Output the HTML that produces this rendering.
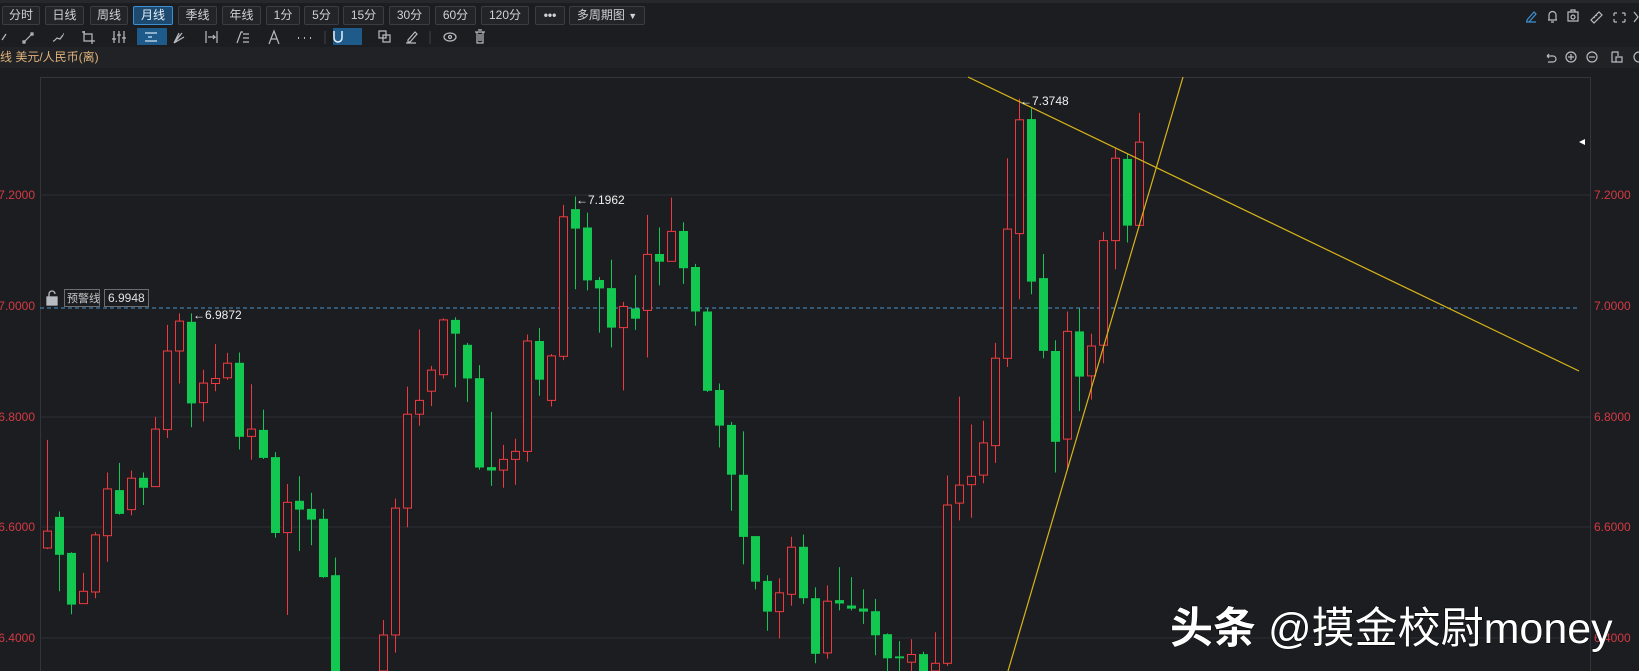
<!DOCTYPE html>
<html><head><meta charset="utf-8">
<style>
*{margin:0;padding:0;box-sizing:border-box}
html{width:1639px;height:671px;overflow:hidden}
body{width:1639px;height:671px;overflow:hidden;background:#1c1d21;font-family:"Liberation Sans","Noto Sans CJK SC",sans-serif;position:relative;color:#c8c8c8}
.r1{position:absolute;left:0;top:0;width:1639px;height:27px;background:#1c1d21;border-top:3px solid #26282c}
.btn{position:absolute;top:6px;height:19px;border:1px solid #3a3d43;background:#222428;color:#cfd2d6;font-size:12px;line-height:17px;text-align:center;border-radius:2px}
.btn.on{background:#1c4a70;border-color:#3f8fd0;color:#e6f0fa}
.r2{position:absolute;left:0;top:27px;width:1639px;height:20px;background:#1c1d21}
.r3{position:absolute;left:0;top:47px;width:1639px;height:21px;background:#202226}
.hl{position:absolute;top:28px;height:17px;background:#1e5a8a}
</style></head><body>
<div class="r1"></div>
<div class="btn" style="left:2px;width:38px">分时</div>
<div class="btn" style="left:45px;width:39px">日线</div>
<div class="btn" style="left:90px;width:38px">周线</div>
<div class="btn on" style="left:133px;width:40px">月线</div>
<div class="btn" style="left:178px;width:39px">季线</div>
<div class="btn" style="left:222px;width:39px">年线</div>
<div class="btn" style="left:266px;width:34px">1分</div>
<div class="btn" style="left:304px;width:35px">5分</div>
<div class="btn" style="left:343px;width:41px">15分</div>
<div class="btn" style="left:389px;width:41px">30分</div>
<div class="btn" style="left:435px;width:41px">60分</div>
<div class="btn" style="left:481px;width:48px">120分</div>
<div class="btn" style="left:535px;width:30px;font-weight:bold">•••</div>
<div class="btn" style="left:569px;width:76px">多周期图 <span style="font-size:9px">▼</span></div>
<div class="r2"></div>
<div class="hl" style="left:137px;width:30px"></div>
<div class="hl" style="left:333px;width:29px"></div>
<div class="r3"></div>
<div style="position:absolute;left:0;top:49px;font-size:12px;color:#e0b27a;line-height:16px">线 美元/人民币(离)</div>
<svg width="1639" height="671" style="position:absolute;left:0;top:0;overflow:hidden" id="s">
<g stroke="#b8bcc2" fill="none" stroke-width="1.2">
<path d="M2 40l4-6"/>
<path d="M24 42l8-8M23 41h2v2h-2zM31 33h2v2h-2z"/>
<path d="M54 41l3-3 3 1 3-4M53 41h1M63 34h1"/>
<path d="M84 31v10h11M84 34h8v7M82 32h3M92 44v-3"/>
<path d="M114 31v12M119 31v12M124 31v12M112 39h4M117 35h4M122 38h4"/>
<path d="M145 33h12M145 41h12M148 37h4" stroke="#d0e4f4"/>
<path d="M174 43l8-10M174 43l6-8M174 43l10-6M174 43l5-10"/>
<path d="M206 31v12M217 31v12M208 37h7l-2-2M213 39l2-2"/>
<path d="M237 43l4-11 2 0M243 34h6M243 38h6M243 42h6"/>
<path d="M269 44l5-13 5 13M271 39h6"/>
<path d="M298 38h1M304 38h1M310 38h1" stroke-width="2"/>
<path d="M325 31v13" stroke="#3a3d43"/>
<path d="M334 31v7a4 4 0 0 0 8 0v-7" stroke="#e6f0fa" stroke-width="1.5"/>
<path d="M379 31h7v7h-7zM383 35h7v7h-7z"/>
<path d="M406 43h10M408 40l7-8 2 2-7 8h-2z"/>
<path d="M430 31v13" stroke="#3a3d43"/>
<ellipse cx="450" cy="37" rx="6" ry="4"/><circle cx="450" cy="37" r="1.5"/>
<path d="M475 32h10M477 32v11h6v-11M479 34v7M481 34v7M478 30h4"/>
<path d="M1526 22h10M1527 20l7-8 2 2-7 8h-2z" stroke="#3f8fd0"/>
<path d="M1548 20h9M1549 20v-5a3 3 0 0 1 7 0v5M1551 22h3"/>
<path d="M1568 12h10v9h-10zM1571 12v-2h4v2"/><circle cx="1573" cy="17" r="2"/>
<path d="M1591 20l8-8 3 3-8 8zM1594 17l1 1M1596 15l1 1"/>
<path d="M1614 13h3M1614 13v3M1625 13h-3M1625 13v3M1614 22h3M1614 22v-3M1625 22h-3M1625 22v-3"/>
<path d="M1634 12l4 5-4 5"/>
<path d="M1547 56h6a3 3 0 0 1 0 6h-5M1547 56l2-2M1547 56l2 2"/>
<circle cx="1571" cy="57" r="5"/><path d="M1568 57h6M1571 54v6"/>
<circle cx="1592" cy="57" r="5"/><path d="M1589 57h6"/>
<path d="M1612 52h6v4M1612 52v10h4M1616 57h6v5h-6z"/>
<circle cx="1639" cy="57" r="5"/>
</g>
<path d="M40.5 671V77.5H1590.5V671" fill="none" stroke="#33353a"/>
<g stroke="#2e3035" stroke-width="1">
<path d="M40 195H1590M40 417H1590M40 527H1590M40 638H1590"/>
</g>
<line x1="40" y1="308" x2="1580" y2="308" stroke="#4a94cc" stroke-dasharray="4,3"/>
<g font-size="12" fill="#d33a44" font-family="Liberation Sans,sans-serif">
<text x="35" y="199" text-anchor="end">7.2000</text>
<text x="35" y="310" text-anchor="end">7.0000</text>
<text x="35" y="421" text-anchor="end">6.8000</text>
<text x="35" y="531" text-anchor="end">6.6000</text>
<text x="35" y="642" text-anchor="end">6.4000</text>
<text x="1594" y="199">7.2000</text>
<text x="1594" y="310">7.0000</text>
<text x="1594" y="421">6.8000</text>
<text x="1594" y="531">6.6000</text>
<text x="1594" y="642">6.4000</text>
</g>
<g id="c"></g>
<line x1="968" y1="77" x2="1579" y2="371" stroke="#d8b418" stroke-width="1.2"/>
<line x1="1008" y1="671" x2="1183" y2="77" stroke="#d8b418" stroke-width="1.2"/>
<path d="M1579 142l6-3v6z" fill="#fff"/>
<g font-size="12" fill="#f0f0f0" font-family="Liberation Sans,sans-serif">
<text x="193" y="319">←6.9872</text>
<text x="576" y="204">←7.1962</text>
<text x="1020" y="105">←7.3748</text>
</g>
<g fill="none" stroke="#b8bcc2" stroke-width="1.3">
<rect x="47" y="297" width="10" height="8" fill="#b8bcc2"/><path d="M49 297v-3a3 3 0 0 1 6 0"/>
</g>
<rect x="64.5" y="289.5" width="35" height="17" fill="#1c1d21" stroke="#6a6d72"/>
<text x="67" y="302" font-size="11" fill="#c8c8c8" font-family="Liberation Sans,Noto Sans CJK SC,sans-serif">预警线</text>
<rect x="104.5" y="289.5" width="44" height="17" fill="#1c1d21" stroke="#6a6d72"/>
<text x="108" y="302" font-size="12" fill="#e0e0e0" font-family="Liberation Sans,sans-serif">6.9948</text>
<text x="1170" y="643" font-size="43" fill="#fff" stroke="#000" stroke-width="1" paint-order="stroke" font-family="Liberation Sans,Noto Sans CJK SC,sans-serif"><tspan font-weight="bold">头条</tspan> @摸金校尉money</text>
</svg>
<script>
var d=[
['r',1203,1247,965,1250],['g',1166,1265,1152,1360],['g',1260,1395,1258,1420],['r',1360,1392,1312,1392],['r',1213,1362,1205,1378],['r',1093,1215,1050,1283],['g',1096,1158,1025,1160],['r',1065,1147,1045,1162],['g',1064,1090,1050,1135],['r',937,1087,905,1087],
['r',733,938,665,960],['r',655,733,635,818],['g',657,870,635,932],['r',817,868,782,917],['r',805,818,715,838],['r',765,803,738,808],['g',764,957,737,990],['r',937,956,820,1017],['g',939,1012,886,1015],['g',1010,1208,997,1220],
['r',1128,1207,1080,1422],['g',1124,1147,1060,1255],['g',1145,1173,1103,1240],['g',1171,1323,1145,1325],['g',1318,1568,1272,1568],['r',1600,1568,1515,1568],['g',1600,1568,1528,1568],['r',1620,1568,1600,1568],['r',1474,1568,1435,1568],['r',1143,1474,1118,1520],
['r',898,1143,826,1193],['r',862,898,677,928],['r',783,838,772,877],['r',652,795,648,805],['g',652,688,645,828],['g',717,805,712,866],['g',804,1037,770,1043],['g',1036,1045,892,1085],['r',1016,1044,978,1090],['r',995,1016,962,1082],
['r',707,995,690,1022],['g',707,808,673,850],['r',746,862,741,878],['r',383,747,352,757],['g',363,414,330,572],['g',411,549,372,575],['g',548,570,540,685],['g',569,672,495,724],['r',617,672,605,836],['g',622,649,535,678],
['r',481,627,378,750],['g',480,500,411,562],['r',421,499,333,499],['g',420,517,397,558],['g',514,630,506,667],['g',630,837,622,840],['g',835,928,818,985],['g',926,1056,918,1150],['g',1056,1218,943,1290],['g',1216,1335,1216,1355],
['g',1333,1413,1318,1463],['r',1364,1413,1326,1483],['r',1245,1368,1218,1398],['g',1244,1378,1212,1393],['g',1378,1523,1350,1548],['r',1386,1521,1345,1536],['g',1383,1392,1297,1410],['g',1397,1405,1323,1410],['g',1405,1413,1355,1445],['g',1412,1475,1380,1527],
['g',1472,1535,1470,1568],['g',1530,1535,1490,1568],['r',1525,1545,1485,1568],['g',1524,1568,1518,1568],['r',1548,1568,1467,1568],['r',1135,1548,1058,1555],['r',1083,1130,852,1175],['r',1060,1082,925,1168],['r',973,1057,915,1078],['r',752,980,712,1025],
['r',415,752,230,775],['r',130,427,75,598],['g',128,552,100,585],['g',543,733,480,752],['g',733,970,705,1050],['r',682,963,630,1040],['g',682,800,622,890],['r',720,798,688,860],['r',445,718,423,765],['r',230,445,202,520],
['g',232,406,218,450],['r',188,405,112,405]];
var h='';function Y(v){return Math.min(672,70+v/2.609)}
for(var i=0;i<d.length;i++){var c=d[i],x=47.5+12*i,col=c[0]=='r'?'#ee3a3f':'#12c850';
var t=Y(c[1]),b=Y(c[2]);if(t>=671)continue;if(b-t<1.5)b=t+1.5;
h+='<line x1="'+x+'" x2="'+x+'" y1="'+Y(c[3]).toFixed(1)+'" y2="'+Y(c[4]).toFixed(1)+'" stroke="'+col+'"/>';
if(c[0]=='r')h+='<rect x="'+(x-4)+'" y="'+t.toFixed(1)+'" width="8" height="'+(b-t).toFixed(1)+'" fill="#1c1d21" stroke="'+col+'"/>';
else h+='<rect x="'+(x-4.5)+'" y="'+t.toFixed(1)+'" width="9" height="'+(b-t).toFixed(1)+'" fill="'+col+'"/>';}
document.getElementById('c').innerHTML=h;
</script>
</body></html>
